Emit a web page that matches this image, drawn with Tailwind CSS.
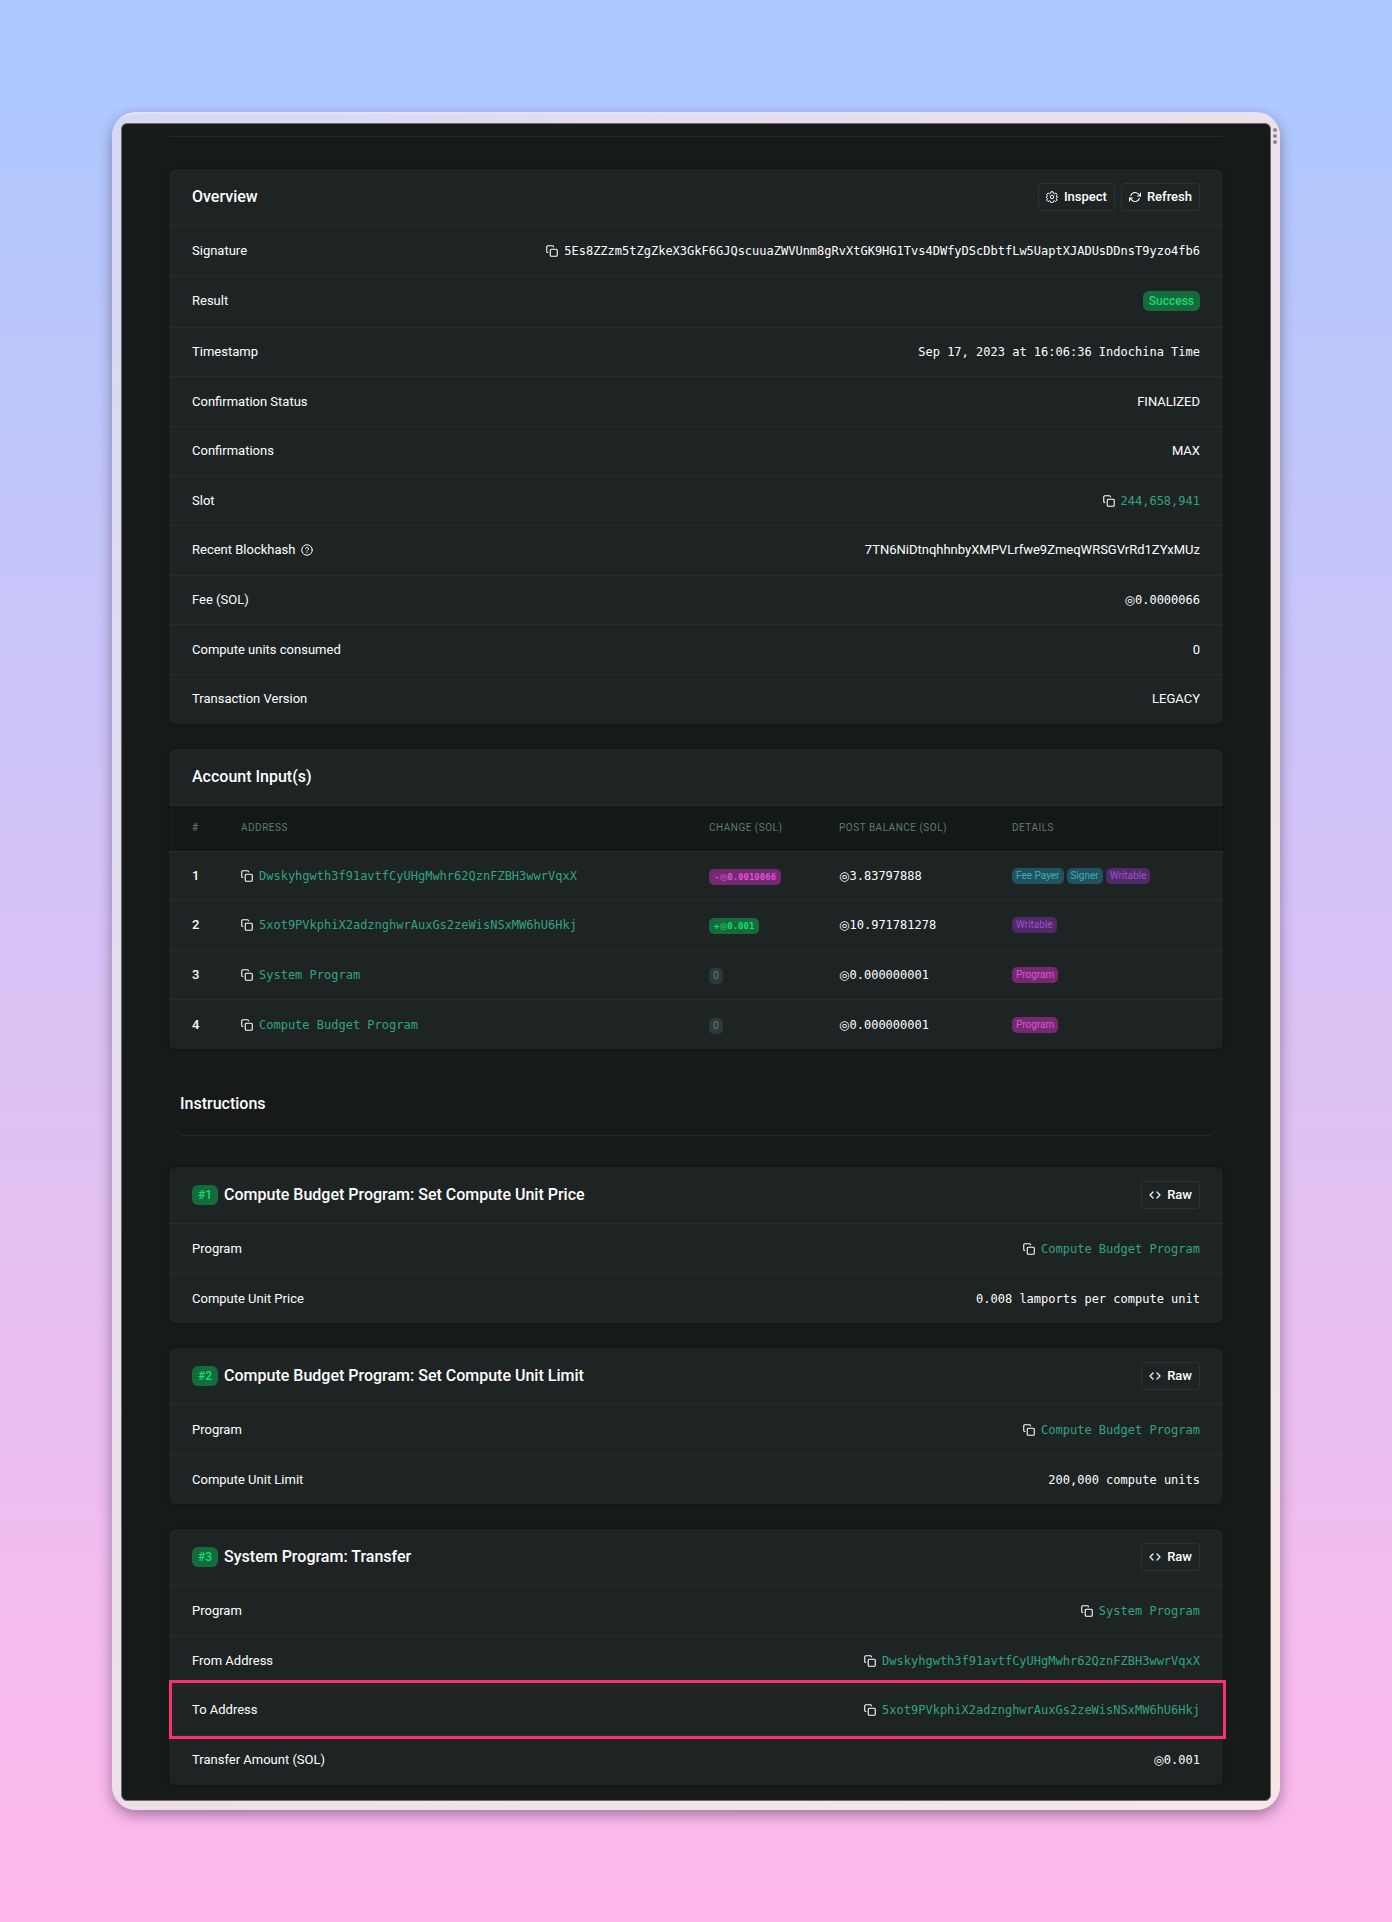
<!DOCTYPE html>
<html lang="en">
<head>
<meta charset="utf-8">
<title>Transaction details</title>
<script src="https://cdn.jsdelivr.net/npm/@tailwindcss/browser@4"></script>
</head>
<body class="min-h-screen bg-linear-to-b from-[#aac9ff] to-[#ffb8ea] p-28 font-['Roboto',sans-serif] text-[13px] leading-5 text-white">
<svg class="hidden" aria-hidden="true">
  <symbol id="copy" viewBox="0 0 24 24" fill="none" stroke="currentColor" stroke-width="2.2" stroke-linejoin="round"><rect x="8.500" y="8.500" width="14" height="14" rx="2"/><path d="M4.500 15H3.500a2 2 0 0 1-2-2V3.500a2 2 0 0 1 2-2H13a2 2 0 0 1 2 2v1"/></symbol>
  <symbol id="code" viewBox="0 0 24 24" fill="none" stroke="currentColor" stroke-width="2.4" stroke-linecap="round" stroke-linejoin="round"><path d="M16 18l6-6-6-6M8 6l-6 6 6 6"/></symbol>
</svg>
<div class="relative rounded-3xl border-t-2 border-t-[#dfe4fa] bg-linear-to-br from-[#d7d8f5] via-[#eadfe9] via-40% to-[#f5e7e5] px-[9px] py-[9px] shadow-[0_5px_14px_rgba(40,20,60,0.42)]">
  <div class="absolute top-3.5 right-[3px] flex flex-col gap-0.5" aria-hidden="true">
    <span class="size-1 rounded-full bg-[#8b8594]"></span><span class="size-1 rounded-full bg-[#8b8594]"></span><span class="size-1 rounded-full bg-[#8b8594]"></span>
  </div>
  <main class="rounded-md border border-[#6d6a72] bg-[#161a19] px-[47px] pt-3 pb-[15px]">
    <hr class="border-[#232827]">

    <section class="mt-8 rounded-md bg-[#1e2424] shadow-[0_0_2px_1px_rgba(0,0,0,0.2)]">
      <header class="flex h-[57px] items-center justify-between border-b border-[#282d2d] px-[23px]">
        <h2 class="text-base font-medium">Overview</h2>
        <div class="flex gap-1.5">
          <button class="flex h-7 items-center gap-1.5 rounded border border-[#2c3333] px-[7px] font-medium"><svg class="size-3" viewBox="0 0 24 24" fill="none" stroke="currentColor" stroke-width="2" stroke-linejoin="round"><circle cx="12" cy="12" r="3.5"/><path d="M10 1.500h4l.7 3 2.200 1 2.700-1.500 2.500 2.900-1.500 2.600.9 2.300 1.900.2-1.900 1.600-.9 1.900 1.500 2.700-2.800 2.800-2.700-1.500-2.200 1-.7 3h-4l-.7-3-2.200-1-2.700 1.500-2.800-2.800 1.500-2.700-.9-1.900-1.900-1.600 1.900-.6.9-1.900-1.500-2.700 2.800-2.800 2.700 1.500 2.200-1z"/></svg>Inspect</button>
          <button class="flex h-7 items-center gap-1.5 rounded border border-[#2c3333] px-[7px] font-medium"><svg class="size-3" viewBox="0 0 24 24" fill="none" stroke="currentColor" stroke-width="2.200" stroke-linecap="round" stroke-linejoin="round"><path d="M23 4v6h-6M1 20v-6h6"/><path d="M3.500 9a9 9 0 0 1 14.900-3.400L23 10M1 14l4.600 4.400A9 9 0 0 0 20.500 15"/></svg>Refresh</button>
        </div>
      </header>
      <table class="h-[498px] w-full [&_td]:px-[23px] [&_th]:px-[23px] [&_th]:text-left [&_th]:font-normal [&_td]:text-right">
        <tbody class="divide-y divide-[#272b2b]">
          <tr class="h-[49px]"><th scope="row">Signature</th><td><div class="flex items-center justify-end gap-1.5 font-['DejaVu_Sans_Mono',monospace] text-[12px]"><svg class="size-3"><use href="#copy"/></svg>5Es8ZZzm5tZgZkeX3GkF6GJQscuuaZWVUnm8gRvXtGK9HG1Tvs4DWfyDScDbtfLw5UaptXJADUsDDnsT9yzo4fb6</div></td></tr>
          <tr class="h-[51px]"><th scope="row">Result</th><td><span class="inline-block rounded-md bg-[#136c3c] px-1.5 text-[12px] font-medium text-[#1ddb70]">Success</span></td></tr>
          <tr class="h-[49px]"><th scope="row">Timestamp</th><td class="font-['DejaVu_Sans_Mono',monospace] text-[12px]">Sep 17, 2023 at 16:06:36 Indochina Time</td></tr>
          <tr class="h-[49px]"><th scope="row">Confirmation Status</th><td>FINALIZED</td></tr>
          <tr class="h-[49px]"><th scope="row">Confirmations</th><td>MAX</td></tr>
          <tr class="h-[49px]"><th scope="row">Slot</th><td><div class="flex items-center justify-end gap-1.5 font-['DejaVu_Sans_Mono',monospace] text-[12px]"><svg class="size-3"><use href="#copy"/></svg><a href="#" class="text-[#33a382]">244,658,941</a></div></td></tr>
          <tr class="h-[49px]"><th scope="row"><span class="flex items-center gap-1.5">Recent Blockhash <svg class="size-3" viewBox="0 0 24 24" fill="none" stroke="currentColor" stroke-width="2" stroke-linecap="round"><circle cx="12" cy="12" r="10.500"/><path d="M9 9.500a3 3 0 1 1 4.500 2.600c-1 .6-1.500 1.100-1.500 2.100M12 17.500v.2"/></svg></span></th><td>7TN6NiDtnqhhnbyXMPVLrfwe9ZmeqWRSGVrRd1ZYxMUz</td></tr>
          <tr class="h-[49px]"><th scope="row">Fee (SOL)</th><td class="font-['DejaVu_Sans_Mono',monospace] text-[12px]"><span class="font-['DejaVu_Sans',sans-serif]">◎</span>0.0000066</td></tr>
          <tr class="h-[49px]"><th scope="row">Compute units consumed</th><td>0</td></tr>
          <tr class="h-[49px]"><th scope="row">Transaction Version</th><td>LEGACY</td></tr>
        </tbody>
      </table>
    </section>

    <section class="mt-[25px] rounded-md bg-[#1e2424] shadow-[0_0_2px_1px_rgba(0,0,0,0.2)]">
      <header class="flex h-[57px] items-center border-b border-[#282d2d] px-[23px]"><h2 class="text-base font-medium">Account Input(s)</h2></header>
      <table class="h-[243px] w-full table-fixed text-left [&_td:first-child]:pl-[23px] [&_th:first-child]:pl-[23px]">
        <colgroup><col class="w-[72px]"><col><col class="w-[130px]"><col class="w-[173px]"><col class="w-[211px]"></colgroup>
        <thead class="bg-[#141817] text-[10px] tracking-wider text-[#5f7a74]">
          <tr class="h-[45px] border-b border-[#282d2d]"><th class="font-normal">#</th><th class="font-normal">ADDRESS</th><th class="font-normal">CHANGE (SOL)</th><th class="font-normal">POST BALANCE (SOL)</th><th class="font-normal">DETAILS</th></tr>
        </thead>
        <tbody class="divide-y divide-[#272b2b]">
          <tr class="h-[49px]"><td class="font-medium">1</td><td><div class="flex items-center gap-1.5 font-['DejaVu_Sans_Mono',monospace] text-[12px]"><svg class="size-3"><use href="#copy"/></svg><a href="#" class="text-[#33a382]">Dwskyhgwth3f91avtfCyUHgMwhr62QznFZBH3wwrVqxX</a></div></td><td><span class="inline-block rounded-[5px] bg-[#732b70] px-[5px] font-['DejaVu_Sans_Mono',monospace] text-[9px] leading-4 font-bold text-[#e251db]">-<span class="font-['DejaVu_Sans',sans-serif] font-normal">◎</span>0.0010066</span></td><td class="font-['DejaVu_Sans_Mono',monospace] text-[12px]"><span class="font-['DejaVu_Sans',sans-serif]">◎</span>3.83797888</td><td><div class="flex gap-[3px] text-[10px] leading-4"><span class="rounded-[5px] bg-[#20535d] px-1 text-[#41a9b9]">Fee Payer</span><span class="rounded-[5px] bg-[#20535d] px-1 text-[#41a9b9]">Signer</span><span class="rounded-[5px] bg-[#502a67] px-1 text-[#a04fcc]">Writable</span></div></td></tr>
          <tr class="h-[49px]"><td class="font-medium">2</td><td><div class="flex items-center gap-1.5 font-['DejaVu_Sans_Mono',monospace] text-[12px]"><svg class="size-3"><use href="#copy"/></svg><a href="#" class="text-[#33a382]">5xot9PVkphiX2adznghwrAuxGs2zeWisNSxMW6hU6Hkj</a></div></td><td><span class="inline-block rounded-[5px] bg-[#136c3c] px-[5px] font-['DejaVu_Sans_Mono',monospace] text-[9px] leading-4 font-bold text-[#1ddb70]">+<span class="font-['DejaVu_Sans',sans-serif] font-normal">◎</span>0.001</span></td><td class="font-['DejaVu_Sans_Mono',monospace] text-[12px]"><span class="font-['DejaVu_Sans',sans-serif]">◎</span>10.971781278</td><td><div class="flex text-[10px] leading-4"><span class="rounded-[5px] bg-[#502a67] px-1 text-[#a04fcc]">Writable</span></div></td></tr>
          <tr class="h-[49px]"><td class="font-medium">3</td><td><div class="flex items-center gap-1.5 font-['DejaVu_Sans_Mono',monospace] text-[12px]"><svg class="size-3"><use href="#copy"/></svg><a href="#" class="text-[#33a382]">System Program</a></div></td><td><span class="inline-block rounded-[5px] bg-[#2d3a3a] px-1 text-[10px] leading-4 text-[#627c77]">0</span></td><td class="font-['DejaVu_Sans_Mono',monospace] text-[12px]"><span class="font-['DejaVu_Sans',sans-serif]">◎</span>0.000000001</td><td><div class="flex text-[10px] leading-4"><span class="rounded-[5px] bg-[#732b70] px-1 text-[#e251db]">Program</span></div></td></tr>
          <tr class="h-[49px]"><td class="font-medium">4</td><td><div class="flex items-center gap-1.5 font-['DejaVu_Sans_Mono',monospace] text-[12px]"><svg class="size-3"><use href="#copy"/></svg><a href="#" class="text-[#33a382]">Compute Budget Program</a></div></td><td><span class="inline-block rounded-[5px] bg-[#2d3a3a] px-1 text-[10px] leading-4 text-[#627c77]">0</span></td><td class="font-['DejaVu_Sans_Mono',monospace] text-[12px]"><span class="font-['DejaVu_Sans',sans-serif]">◎</span>0.000000001</td><td><div class="flex text-[10px] leading-4"><span class="rounded-[5px] bg-[#732b70] px-1 text-[#e251db]">Program</span></div></td></tr>
        </tbody>
      </table>
    </section>

    <div class="mx-[11px] mt-[43px] border-b border-[#232827] pb-[19px]"><h2 class="text-base font-medium">Instructions</h2></div>

    <section class="mt-[31px] rounded-md bg-[#1e2424] shadow-[0_0_2px_1px_rgba(0,0,0,0.2)]">
      <header class="flex h-[57px] items-center justify-between border-b border-[#282d2d] px-[23px]">
        <h3 class="flex items-center gap-1.5 text-base font-medium"><span class="rounded-md bg-[#136c3c] px-1.5 text-[12px] leading-5 text-[#1ddb70]">#1</span>Compute Budget Program: Set Compute Unit Price</h3>
        <button class="flex h-7 items-center gap-1.5 rounded border border-[#2c3333] px-[7px] font-medium"><svg class="size-3"><use href="#code"/></svg>Raw</button>
      </header>
      <table class="h-[99px] w-full [&_td]:px-[23px] [&_th]:px-[23px] [&_th]:text-left [&_th]:font-normal [&_td]:text-right">
        <tbody class="divide-y divide-[#272b2b]">
          <tr class="h-[49px]"><th scope="row">Program</th><td><div class="flex items-center justify-end gap-1.5 font-['DejaVu_Sans_Mono',monospace] text-[12px]"><svg class="size-3"><use href="#copy"/></svg><a href="#" class="text-[#33a382]">Compute Budget Program</a></div></td></tr>
          <tr class="h-[49px]"><th scope="row">Compute Unit Price</th><td class="font-['DejaVu_Sans_Mono',monospace] text-[12px]">0.008 lamports per compute unit</td></tr>
        </tbody>
      </table>
    </section>

    <section class="mt-[25px] rounded-md bg-[#1e2424] shadow-[0_0_2px_1px_rgba(0,0,0,0.2)]">
      <header class="flex h-[57px] items-center justify-between border-b border-[#282d2d] px-[23px]">
        <h3 class="flex items-center gap-1.5 text-base font-medium"><span class="rounded-md bg-[#136c3c] px-1.5 text-[12px] leading-5 text-[#1ddb70]">#2</span>Compute Budget Program: Set Compute Unit Limit</h3>
        <button class="flex h-7 items-center gap-1.5 rounded border border-[#2c3333] px-[7px] font-medium"><svg class="size-3"><use href="#code"/></svg>Raw</button>
      </header>
      <table class="h-[99px] w-full [&_td]:px-[23px] [&_th]:px-[23px] [&_th]:text-left [&_th]:font-normal [&_td]:text-right">
        <tbody class="divide-y divide-[#272b2b]">
          <tr class="h-[49px]"><th scope="row">Program</th><td><div class="flex items-center justify-end gap-1.5 font-['DejaVu_Sans_Mono',monospace] text-[12px]"><svg class="size-3"><use href="#copy"/></svg><a href="#" class="text-[#33a382]">Compute Budget Program</a></div></td></tr>
          <tr class="h-[49px]"><th scope="row">Compute Unit Limit</th><td class="font-['DejaVu_Sans_Mono',monospace] text-[12px]">200,000 compute units</td></tr>
        </tbody>
      </table>
    </section>

    <section class="mt-[25px] rounded-md bg-[#1e2424] shadow-[0_0_2px_1px_rgba(0,0,0,0.2)]">
      <header class="flex h-[57px] items-center justify-between border-b border-[#282d2d] px-[23px]">
        <h3 class="flex items-center gap-1.5 text-base font-medium"><span class="rounded-md bg-[#136c3c] px-1.5 text-[12px] leading-5 text-[#1ddb70]">#3</span>System Program: Transfer</h3>
        <button class="flex h-7 items-center gap-1.5 rounded border border-[#2c3333] px-[7px] font-medium"><svg class="size-3"><use href="#code"/></svg>Raw</button>
      </header>
      <table class="h-[199px] w-full [&_td]:px-[23px] [&_th]:px-[23px] [&_th]:text-left [&_th]:font-normal [&_td]:text-right">
        <tbody class="divide-y divide-[#272b2b]">
          <tr class="h-[49px]"><th scope="row">Program</th><td><div class="flex items-center justify-end gap-1.5 font-['DejaVu_Sans_Mono',monospace] text-[12px]"><svg class="size-3"><use href="#copy"/></svg><a href="#" class="text-[#33a382]">System Program</a></div></td></tr>
          <tr class="h-[49px]"><th scope="row">From Address</th><td><div class="flex items-center justify-end gap-1.5 font-['DejaVu_Sans_Mono',monospace] text-[12px]"><svg class="size-3"><use href="#copy"/></svg><a href="#" class="text-[#33a382]">Dwskyhgwth3f91avtfCyUHgMwhr62QznFZBH3wwrVqxX</a></div></td></tr>
          <tr class="relative h-[49px] after:absolute after:-top-1.5 after:-right-[3px] after:-bottom-[5px] after:left-0 after:border-3 after:border-[#ff2e6c]"><th scope="row">To Address</th><td><div class="flex items-center justify-end gap-1.5 font-['DejaVu_Sans_Mono',monospace] text-[12px]"><svg class="size-3"><use href="#copy"/></svg><a href="#" class="text-[#33a382]">5xot9PVkphiX2adznghwrAuxGs2zeWisNSxMW6hU6Hkj</a></div></td></tr>
          <tr class="h-[49px]"><th scope="row">Transfer Amount (SOL)</th><td class="font-['DejaVu_Sans_Mono',monospace] text-[12px]"><span class="font-['DejaVu_Sans',sans-serif]">◎</span>0.001</td></tr>
        </tbody>
      </table>
    </section>
  </main>
</div>
</body>
</html>
